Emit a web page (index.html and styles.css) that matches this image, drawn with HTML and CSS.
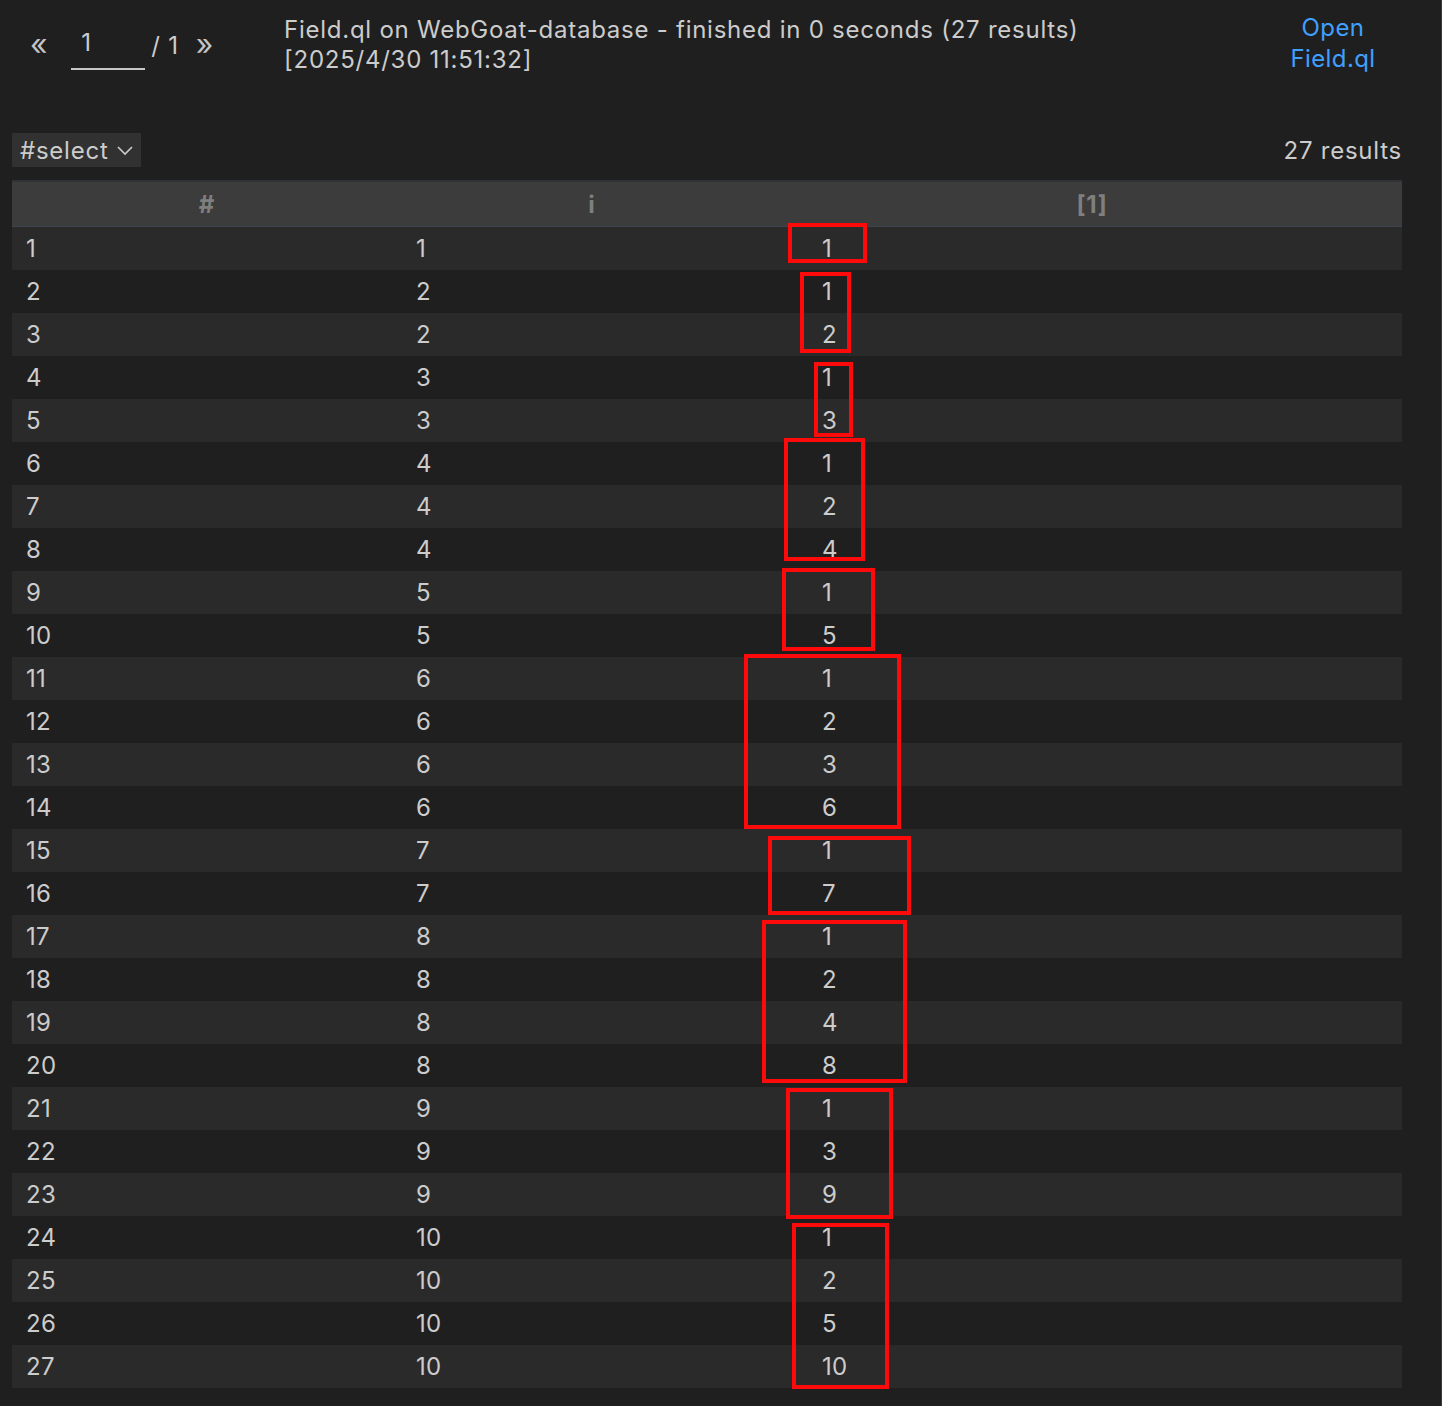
FILE: index.html
```html
<!DOCTYPE html>
<html lang="en">
<head>
    <meta charset="UTF-8">
    <title>CodeQL Query Results</title>
    <link rel="stylesheet" href="styles.css">
</head>
<body>
    <div class="page">
        <div class="topbar">
            <div class="pager">
                <span class="arrow">&laquo;</span>
                <span class="page-input">1</span>
                <span class="page-total">/ 1</span>
                <span class="arrow">&raquo;</span>
            </div>
            <div class="title">
                Field.ql on WebGoat-database - finished in 0 seconds (27 results)<br>
                [2025/4/30 11:51:32]
            </div>
            <a class="open-link" href="#">Open<br>Field.ql</a>
        </div>

        <div class="toolbar">
            <div class="select-box">
                #select
                <svg width="18" height="12" viewBox="0 0 18 12"><polyline points="2,3 9,10 16,3" fill="none" stroke="#cccccc" stroke-width="1.6"/></svg>
            </div>
            <div class="count">27 results</div>
        </div>

        <table class="results">
            <colgroup>
                <col class="c1"><col class="c2"><col class="c3">
            </colgroup>
            <thead>
                <tr><th>#</th><th>i</th><th>[1]</th></tr>
            </thead>
            <tbody id="rows"></tbody>
        </table>

        <!-- annotation boxes drawn over the result column -->
        <div class="mark" style="left:788px;top:223px;width:79px;height:40px"></div>
        <div class="mark" style="left:800px;top:272px;width:51px;height:81px"></div>
        <div class="mark" style="left:814px;top:362px;width:39px;height:75px"></div>
        <div class="mark" style="left:784px;top:438px;width:81px;height:123px"></div>
        <div class="mark" style="left:782px;top:568px;width:93px;height:83px"></div>
        <div class="mark" style="left:744px;top:654px;width:157px;height:175px"></div>
        <div class="mark" style="left:768px;top:836px;width:143px;height:79px"></div>
        <div class="mark" style="left:762px;top:920px;width:145px;height:163px"></div>
        <div class="mark" style="left:786px;top:1088px;width:107px;height:131px"></div>
        <div class="mark" style="left:792px;top:1223px;width:97px;height:166px"></div>
    </div>

    <script>
        // divisors of i for i = 1..10
        const rows = document.getElementById('rows');
        let n = 1;
        for (let i = 1; i <= 10; i++) {
            for (let d = 1; d <= i; d++) {
                if (i % d !== 0) continue;
                const tr = document.createElement('tr');
                tr.innerHTML = '<td>' + n + '</td><td>' + i + '</td><td class="val">' + d + '</td>';
                rows.appendChild(tr);
                n++;
            }
        }
    </script>
</body>
</html>
```

FILE: styles.css
```css
body {
    margin: 0;
    background-color: #1f1f1f;
    color: #cccccc;
    font-family: Inter, "Noto Sans", sans-serif;
    font-size: 24px;
    letter-spacing: 0.75px;
}
.page {
    position: relative;
    width: 1441px;
    height: 1406px;
    border-right: 1px solid #3a3a3a;
}
.topbar {
    display: flex;
    align-items: flex-start;
    padding: 14px 38px 0 30px;
    height: 105px;
    box-sizing: border-box;
}
.pager {
    display: flex;
    align-items: center;
    width: 254px;
    height: 62px;
}
.arrow {
    font-size: 30px;
    color: #c4c4c4;
    margin-top: -2px;
}
.page-input {
    width: 64px;
    margin: 8px 6px 0 23px;
    padding-left: 10px;
    border-bottom: 2px solid #c8c8c8;
    line-height: 30px;
    padding-bottom: 10px;
}
.page-total {
    margin-right: 17px;
}
.title {
    flex: 1;
    line-height: 30px;
    padding-top: 1px;
}
.open-link {
    width: 140px;
    margin-top: -2px;
    text-align: center;
    color: #3fa0ff;
    text-decoration: none;
    line-height: 31px;
    letter-spacing: 0.4px;
}
.toolbar {
    display: flex;
    justify-content: space-between;
    align-items: center;
    width: 1390px;
    margin-left: 12px;
    margin-top: 28px;
}
.select-box {
    display: flex;
    align-items: center;
    gap: 8px;
    height: 34px;
    padding: 0 7px 0 8px;
    background-color: #313131;
}
.count {
    color: #cccccc;
}
.results {
    margin: 13px 0 0 12px;
    width: 1390px;
    border-collapse: collapse;
    table-layout: fixed;
}
.c1 { width: 390px; }
.c2 { width: 380px; }
.c3 { width: 620px; }
.results th {
    height: 44px;
    background-color: #3c3c3c;
    color: #7f7f7f;
    font-weight: bold;
    border-top: 2px solid #2f3236;
    border-bottom: 1px solid #3b4550;
    padding: 0;
}
.results td {
    height: 43px;
    padding: 0 0 0 14px;
    box-sizing: border-box;
    letter-spacing: 0.3px;
}
.results td.val {
    padding-left: 40px;
}
.results tbody tr:nth-child(odd) {
    background-color: #2a2a2a;
}
.mark {
    position: absolute;
    border: 4px solid #ff0a0a;
    box-sizing: border-box;
}
```
